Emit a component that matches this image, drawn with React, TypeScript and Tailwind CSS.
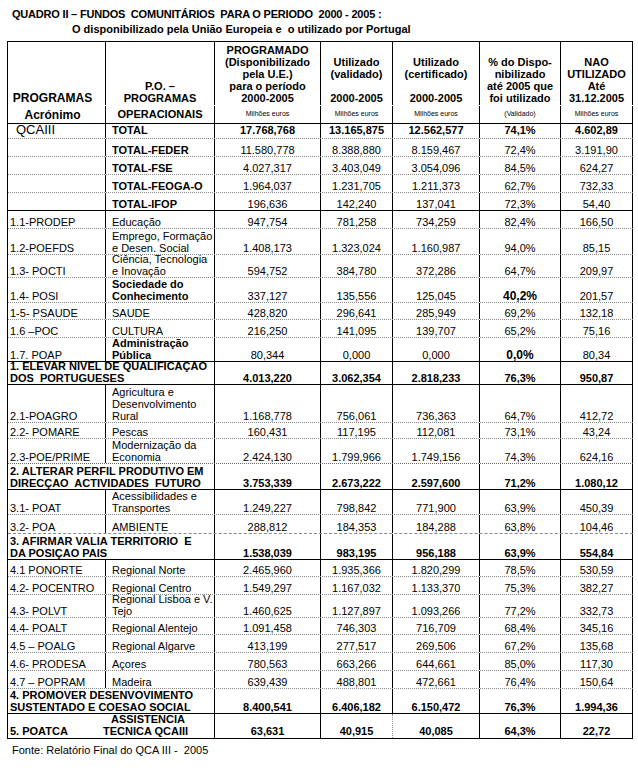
import React from "react";

type Line = "dot" | "solid" | "gray" | "dash";

interface Row {
  h: number;
  c1?: string;
  c2?: string[];
  span?: string[];
  v: string[];
  c2b?: boolean;
  nb?: boolean;
  pb?: boolean;
  line: Line;
}

const rows: Row[] = [
  { h: 15, c1: "QCAIII", c2: ["TOTAL"], c2b: true, nb: true, v: ["17.768,768", "13.165,875", "12.562,577", "74,1%", "4.602,89"], line: "dot" },
  { h: 18, c2: ["TOTAL-FEDER"], c2b: true, v: ["11.580,778", "8.388,880", "8.159,467", "72,4%", "3.191,90"], line: "dot" },
  { h: 18, c2: ["TOTAL-FSE"], c2b: true, v: ["4.027,317", "3.403,049", "3.054,096", "84,5%", "624,27"], line: "dot" },
  { h: 18, c2: ["TOTAL-FEOGA-O"], c2b: true, v: ["1.964,037", "1.231,705", "1.211,373", "62,7%", "732,33"], line: "dot" },
  { h: 18, c2: ["TOTAL-IFOP"], c2b: true, v: ["196,636", "142,240", "137,041", "72,3%", "54,40"], line: "solid" },
  { h: 18, c1: "1.1-PRODEP", c2: ["Educação"], v: ["947,754", "781,258", "734,259", "82,4%", "166,50"], line: "dot" },
  { h: 26, c1: "1.2-POEFDS", c2: ["Emprego, Formação", "e Desen. Social"], v: ["1.408,173", "1.323,024", "1.160,987", "94,0%", "85,15"], line: "dot" },
  { h: 23, c1: "1.3- POCTI", c2: ["Ciência, Tecnologia", "e Inovação"], v: ["594,752", "384,780", "372,286", "64,7%", "209,97"], line: "dot" },
  { h: 25, c1: "1.4- POSI", c2: ["Sociedade do", "Conhecimento"], c2b: true, pb: true, v: ["337,127", "135,556", "125,045", "40,2%", "201,57"], line: "dot" },
  { h: 17, c1: "1-5- PSAUDE", c2: ["SAUDE"], v: ["428,820", "296,641", "285,949", "69,2%", "132,18"], line: "dot" },
  { h: 18, c1: "1.6 –POC", c2: ["CULTURA"], v: ["216,250", "141,095", "139,707", "65,2%", "75,16"], line: "dot" },
  { h: 24, c1: "1.7. POAP", c2: ["Administração", "Pública"], c2b: true, pb: true, v: ["80,344", "0,000", "0,000", "0,0%", "80,34"], line: "solid" },
  { h: 23, span: ["1. ELEVAR NIVEL DE QUALIFICAÇAO", "DOS  PORTUGUESES"], nb: true, v: ["4.013,220", "3.062,354", "2.818,233", "76,3%", "950,87"], line: "solid" },
  { h: 38, c1: "2.1-POAGRO", c2: ["Agricultura e", "Desenvolvimento", "Rural"], v: ["1.168,778", "756,061", "736,363", "64,7%", "412,72"], line: "dot" },
  { h: 16, c1: "2.2- POMARE", c2: ["Pescas"], v: ["160,431", "117,195", "112,081", "73,1%", "43,24"], line: "dot" },
  { h: 25, c1: "2.3-POE/PRIME", c2: ["Modernização da", "Economia"], v: ["2.424,130", "1.799,966", "1.749,156", "74,3%", "624,16"], line: "gray" },
  { h: 26, span: ["2. ALTERAR PERFIL PRODUTIVO EM", "DIRECÇAO  ACTIVIDADES  FUTURO"], nb: true, v: ["3.753,339", "2.673,222", "2.597,600", "71,2%", "1.080,12"], line: "solid" },
  { h: 25, c1: "3.1- POAT", c2: ["Acessibilidades e", "Transportes"], v: ["1.249,227", "798,842", "771,900", "63,9%", "450,39"], line: "dot" },
  { h: 19, c1: "3.2- POA", c2: ["AMBIENTE"], v: ["288,812", "184,353", "184,288", "63,8%", "104,46"], line: "dash" },
  { h: 26, span: ["3. AFIRMAR VALIA TERRITORIO  E", "DA POSIÇAO PAIS"], nb: true, v: ["1.538,039", "983,195", "956,188", "63,9%", "554,84"], line: "solid" },
  { h: 17, c1: "4.1 PONORTE", c2: ["Regional Norte"], v: ["2.465,960", "1.935,366", "1.820,299", "78,5%", "530,59"], line: "dot" },
  { h: 18, c1: "4.2- POCENTRO", c2: ["Regional Centro"], v: ["1.549,297", "1.167,032", "1.133,370", "75,3%", "382,27"], line: "dot" },
  { h: 23, c1: "4.3- POLVT", c2: ["Regional Lisboa e V.", "Tejo"], v: ["1.460,625", "1.127,897", "1.093,266", "77,2%", "332,73"], line: "dot" },
  { h: 17, c1: "4.4- POALT", c2: ["Regional Alentejo"], v: ["1.091,458", "746,303", "716,709", "68,4%", "345,16"], line: "dot" },
  { h: 18, c1: "4.5 – POALG", c2: ["Regional Algarve"], v: ["413,199", "277,517", "269,506", "67,2%", "135,68"], line: "dot" },
  { h: 18, c1: "4.6- PRODESA", c2: ["Açores"], v: ["780,563", "663,266", "644,661", "85,0%", "117,30"], line: "dot" },
  { h: 18, c1: "4.7 – POPRAM", c2: ["Madeira"], v: ["639,439", "488,801", "472,661", "76,4%", "150,64"], line: "dot" },
  { h: 25, span: ["4. PROMOVER DESENVOVIMENTO", "SUSTENTADO E COESAO SOCIAL"], nb: true, v: ["8.400,541", "6.406,182", "6.150,472", "76,3%", "1.994,36"], line: "solid" },
];

const lineCls: Record<Line, string> = {
  dot: "border-b border-dotted border-[#8a8a8a]",
  solid: "border-b border-solid border-black",
  gray: "border-b border-dotted border-[#6a6a6a]",
  dash: "border-b border-dashed border-[#8a8a8a]",
};

// widths include the right border of each column
const W = ["w-[98px]", "w-[109px]", "w-[106px]", "w-[72px]", "w-[87px]", "w-[81px]", "w-[72px]"];

const cell = "shrink-0 border-r border-black flex flex-col justify-end whitespace-pre";

const HeadCell = ({ w, lines }: { w: string; lines: string[] }) => (
  <div className={cell + " items-center pb-[1px] " + w}>
    {lines.map((l, i) => (
      <div key={i} className="h-[12px] leading-[12px]">{l}</div>
    ))}
  </div>
);

const Small = ({ w, t }: { w: string; t: string }) => (
  <div className={"shrink-0 border-r border-black flex items-center justify-center text-[7px] " + w}>{t}</div>
);

export default function App() {
  return (
    <div className="w-[638px] h-[770px] bg-white text-black font-['Liberation_Sans',Arial,sans-serif]">
      <div className="pl-[12px] pt-[7px] text-[11px] font-bold leading-[15px] whitespace-pre">
        <div className="tracking-[-0.2px]">QUADRO II – FUNDOS  COMUNITÁRIOS  PARA O PERIODO  2000 - 2005 :</div>
        <div className="pl-[60px]">O disponibilizado pela União Europeia e  o utilizado por Portugal</div>
      </div>

      <div className="mt-[4px] ml-[7px] w-[626px] border-l border-t border-black text-[11px]">
        {/* header */}
        <div className="flex h-[64px] font-bold border-b border-white">
          <div className={cell + " items-center pb-[1px] pr-[8px] text-[12px] " + W[0]}>
            <div className="leading-[12px]">PROGRAMAS</div>
          </div>
          <HeadCell w={W[1]} lines={["P.O. –", "PROGRAMAS"]} />
          <HeadCell w={W[2]} lines={["PROGRAMADO", "(Disponibilizado", "pela U.E.)", "para o período", "2000-2005"]} />
          <HeadCell w={W[3]} lines={["Utilizado", "(validado)", "", "2000-2005"]} />
          <HeadCell w={W[4]} lines={["Utilizado", "(certificado)", "", "2000-2005"]} />
          <HeadCell w={W[5]} lines={["% do Dispo-", "nibilizado", "até 2005 que", "foi utilizado"]} />
          <HeadCell w={W[6]} lines={["NAO", "UTILIZADO", "Até", "31.12.2005"]} />
        </div>
        <div className={"flex h-[18px] " + lineCls.solid}>
          <div className={"shrink-0 border-r border-black flex items-center justify-center pr-[8px] text-[12px] font-bold " + W[0]}>Acrónimo</div>
          <div className={"shrink-0 border-r border-black flex items-center justify-center font-bold " + W[1]}>OPERACIONAIS</div>
          <Small w={W[2]} t="Milhões euros" />
          <Small w={W[3]} t="Milhões euros" />
          <Small w={W[4]} t="Milhões euros" />
          <Small w={W[5]} t="(Validado)" />
          <Small w={W[6]} t="Milhões euros" />
        </div>

        {rows.map((r, i) => {
          const first = i === 0;
          const pad = first ? " pb-[2px]" : "";
          return (
            <div key={i} className={"flex " + lineCls[r.line]} style={{ height: r.h }}>
              {r.span ? (
                <div className={cell + " w-[207px] pl-[2px] font-bold leading-[12px]"}>
                  {r.span.map((l, j) => (
                    <div key={j}>{l}</div>
                  ))}
                </div>
              ) : (
                <>
                  <div className={cell + " leading-[12px] " + W[0] + pad + (first ? " pl-[8px] text-[13px]" : " pl-[2px]")}>
                    {r.c1}
                  </div>
                  <div className={cell + " pl-[6px] leading-[12px] " + W[1] + pad + (r.c2b ? " font-bold" : "")}>
                    {r.c2?.map((l, j) => (
                      <div key={j}>{l}</div>
                    ))}
                  </div>
                </>
              )}
              {r.v.map((v, j) => (
                <div
                  key={j}
                  className={
                    cell + " items-center leading-[12px] " + W[j + 2] + pad +
                    (r.nb ? " font-bold" : "") +
                    (r.pb && j === 3 ? " font-bold text-[12px]" : "")
                  }
                >
                  {v}
                </div>
              ))}
            </div>
          );
        })}

        <div className={"flex h-[25px] font-bold " + lineCls.solid}>
          <div className={cell + " w-[207px] pb-[1px] leading-[12px]"}>
            <div className="flex items-end">
              <div className="w-[95px] pl-[2px]">5. POATCA</div>
              <div>
                <div className="pl-[8px]">ASSISTENCIA</div>
                <div>TECNICA QCAIII</div>
              </div>
            </div>
          </div>
          <div className={cell + " items-center pb-[1px] leading-[12px] " + W[2]}>63,631</div>
          <div className={"shrink-0 border-r border-dotted border-[#8a8a8a] flex flex-col justify-end items-center pb-[1px] leading-[12px] " + W[3]}>40,915</div>
          <div className={cell + " items-center pb-[1px] leading-[12px] " + W[4]}>40,085</div>
          <div className={cell + " items-center pb-[1px] leading-[12px] " + W[5]}>64,3%</div>
          <div className={cell + " items-center pb-[1px] leading-[12px] " + W[6]}>22,72</div>
        </div>
      </div>

      <div className="pl-[12px] pt-[4px] text-[11px] leading-[14px] whitespace-pre">Fonte: Relatório Final do QCA III -  2005</div>
    </div>
  );
}
